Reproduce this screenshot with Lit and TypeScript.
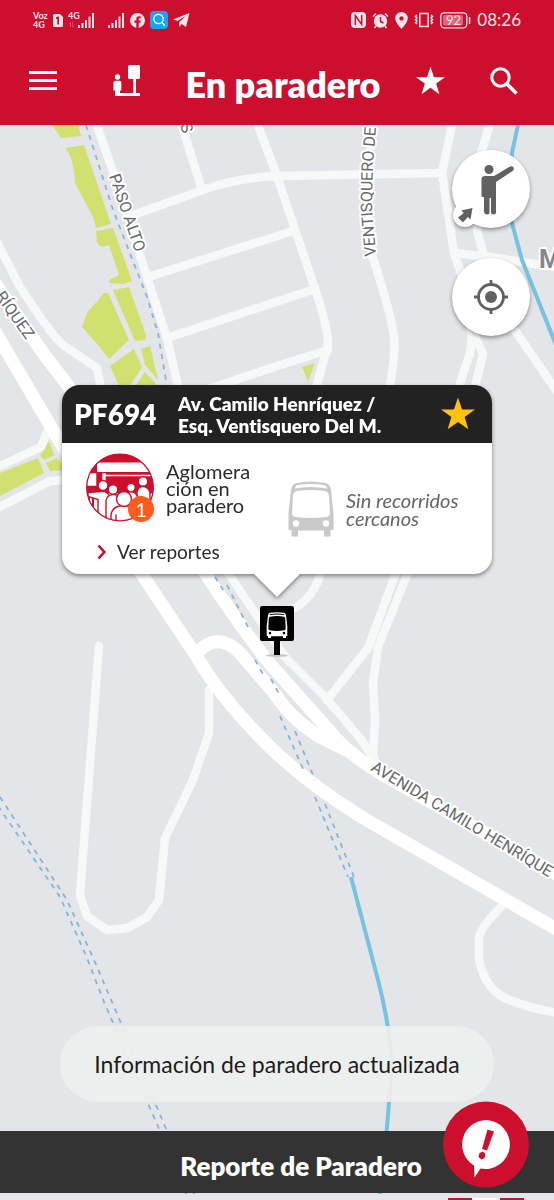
import { LitElement, html, css, svg } from "lit";
import { customElement, property } from "lit/decorators.js";

const PARKS = [
  "52,125 78,125 81,136 61,138",
  "66,148 84,145 111,224 96,228 93,217 75,183 74,170 71,158",
  "96,231 113,228 132,281 123,284 109,283 109,280 119,275 109,245 102,247 97,243",
  "113,290 129,287 146,335 145,340 135,341",
  "87,313 104,293 108,293 129,340 109,359 100,347 82,327",
  "110,366 134,349 142,367 131,384 129,392 122,392",
  "134,388 145,372 158,386 158,392 134,392",
  "141,349 150,346 158,380 145,365",
  "302,367 315,363 308,381",
  "0,473 38,458 44,473 0,496",
  "49,441 54,455 44,460 40,456",
  "46,463 57,458 66,470 50,471",
];

const STREETS = [
  "M95 120 L115 177 L147 277 L167 338 L180 395",
  "M180 120 L202 190",
  "M128 217 L200 191 Q235 178 277 176 L441 173",
  "M148 277 L290 232",
  "M167 338 L312 290",
  "M200 392 L277 366 L328 350",
  "M256 120 L277 176 L312 280 Q328 325 328 345 L314 395",
  "M373 120 L367 190 L372 255 Q393 320 394 338 Q396 355 388 395",
  "M453 120 L442 173 L454 253 L464 282 L472 337 L470 353 L456 395",
  "M491 120 L480 157 L477 230 L484 256",
  "M475 337 L483 354 L473 395",
  "M454 253 L490 257 L560 268",
  "M505 316 L560 396",
  "M322 570 Q314 597 295 608",
  "M397 570 L368 648 L327 700",
  "M409 570 L378 647 L373 683 L375 720 L373 757",
  "M226 570 L285 657 L325 697 L360 738 L375 760",
  "M99 646 L80 895 L87 916 L107 930 L128 928 L147 917 L159 900 L165 838 L193 780 L209 733 L209 690",
  "M507 901 Q482 925 479 937 L479 960 Q486 992 510 1000 Q535 1010 560 1013",
  "M-4 240 L20 287 L40 317 Q58 342 66 347 L97 368 L102 392",
  "M-4 468 L41 447 L50 425",
  "M-4 509 L50 481 L66 480",
];

const AVENUES = [
  "M-10 276 L43 353 L66 383 L205 573 Q240 626 270 664 L327 728 Q345 752 380 773 L560 876",
  "M-10 323 L57 437 L141 573 L197 657 Q222 700 270 747 Q310 786 370 822 L560 931",
  "M196 654 Q217 630 240 653 L275 694 Q290 718 320 737 L350 752",
];

const CANALS = [
  "M86 125 L113 210 L147 297 L158 333 L168 392",
  "M215 577 L225 593",
  "M227 585 L249 629",
  "M255 660 L263 674",
  "M271 679 L279 694",
  "M280 716 L303 769",
  "M295 731 L315 780",
  "M315 797 L348 877",
  "M325 804 L354 877",
  "M0 797 L67 900 L94 960 L112 1002 L170 1138 L197 1200",
  "M-2 806 L60 897 L87 958 L104 1002 L163 1138 L189 1200",
];

const STAR =
  "M12 1 L14.7 9 H23.3 L16.4 14 L18.9 22.2 L12 17.3 L5.1 22.2 L7.6 14 L0.7 9 H9.3 Z";

@customElement("city-map")
class CityMap extends LitElement {
  static styles = css`
    :host { display: block; background: #e4e5e9; }
    .canvas { display: block; width: 100%; height: 100%; }
    .park { fill: #d2e06f; }
    .street, .avenue, .river, .canal { fill: none; stroke-linejoin: round; }
    .street { stroke: #f7f8f8; stroke-width: 8.5; stroke-linecap: round; }
    .avenue { stroke: #ffffff; stroke-width: 13; }
    .river { stroke: #76c2e0; stroke-width: 4; }
    .canal { stroke: #86b4d8; stroke-width: 1.8; stroke-dasharray: 5 5.5; }
    .label {
      font: 400 16px Roboto, sans-serif;
      fill: #66686a;
      stroke: #ffffff;
      stroke-width: 4;
      stroke-linejoin: round;
      paint-order: stroke;
    }
    .place { font: 700 25px Roboto, sans-serif; fill: #85878a; }
  `;

  render() {
    return html`<svg class="canvas" viewBox="0 125 554 1075" preserveAspectRatio="xMidYMin slice" role="img" aria-label="Mapa">
      ${PARKS.map((p) => svg`<polygon class="park" points=${p}></polygon>`)}
      ${STREETS.map((d) => svg`<path class="street" d=${d}></path>`)}
      <path class="river" d="M519 120 L512 153 V223 L522 260 L556 345 M351 877 L378 980 Q396 1050 390 1090 L386 1140 L379 1200" />
      ${AVENUES.map((d) => svg`<path class="avenue" d=${d}></path>`)}
      ${CANALS.map((d) => svg`<path class="canal" d=${d}></path>`)}
      <defs>
        <path id="ventisquero" d="M376 256 L372 205 L373 165 L378 100" />
      </defs>
      <text class="label" transform="translate(109 176) rotate(71)">PASO ALTO</text>
      <text class="label" transform="translate(180 125) rotate(72)">S</text>
      <text class="label"><textPath href="#ventisquero">VENTISQUERO DE</textPath></text>
      <text class="label" transform="translate(-5 296) rotate(55)">RÍQUEZ</text>
      <text class="label" transform="translate(370 770) rotate(31)">AVENIDA CAMILO HENRÍQUE</text>
      <text class="label place" x="539" y="268">M</text>
    </svg>`;
  }
}

@customElement("status-bar")
class StatusBar extends LitElement {
  static styles = css`
    :host {
      display: flex;
      align-items: center;
      justify-content: space-between;
      height: 40px;
      padding: 0 33px;
      color: #ffe3ea;
      background: #cb0f2d;
      font-family: Lato, sans-serif;
    }
    .group { display: flex; align-items: center; gap: 6px; }
    .lead { gap: 5px; }
    .voice { font-size: 9px; font-weight: 700; line-height: 9px; }
    .time { font-size: 17px; line-height: 20px; }
    .icon { display: block; fill: currentColor; }
    .pct { font: 400 13px Lato, sans-serif; }
    .net { font: 700 9px Lato, sans-serif; }
  `;

  render() {
    return html`
      <div class="group lead">
        <div class="voice">Voz<br />4G</div>
        <svg class="icon" width="10" height="13" viewBox="0 0 10 13"><path fill-rule="evenodd" d="M1.5 0H7L10 3V11.5Q10 13 8.500 13H1.500Q0 13 0 11.500V1.500Q0 0 1.500 0ZM3 3.500V5H4.300V10.500H6V2.500H4.500Z" /></svg>
        <svg class="icon" width="27" height="18" viewBox="0 0 27 18"><text class="net" x="0" y="8">4G</text><path d="M10 14h2v3h-2zM13.500 12h2v5h-2zM17 9h2v8h-2zM20.500 5.500h2V17h-2zM24 2h2v15h-2z" /><path opacity=".45" d="M1.500 13 3 10.500V16H2.200V13ZM5 10.500V14.500H6L4.500 17V10.500Z" /></svg>
        <svg class="icon" width="25" height="18" viewBox="-8 0 25 18"><path d="M0 14h2v3H0zM3.500 12h2v5h-2zM7 9h2v8H7zM10.500 5.500h2V17h-2zM14 2h2v15h-2z" /></svg>
        <svg class="icon" width="15" height="15" viewBox="0 0 15 15"><path fill-rule="evenodd" d="M7.500 0A7.500 7.500 0 0 0 6.300 14.900V9.700H4.400V7.500H6.300V6Q6.300 3.200 9 3.200L10.700 3.400V5.200H9.700Q8.700 5.200 8.700 6.200V7.500H10.700L10.400 9.700H8.700V14.900A7.500 7.500 0 0 0 7.500 0Z" /></svg>
        <svg class="icon" width="18" height="18" viewBox="0 0 18 18"><rect width="18" height="18" rx="4" fill="#16a5f5" /><circle cx="8.500" cy="8" r="4.700" fill="none" stroke="#fff" stroke-width="1.300" /><path d="M12 11.500 14.500 14.500" stroke="#fff" stroke-width="1.400" stroke-linecap="round" /></svg>
        <svg class="icon" width="17" height="16" viewBox="0 0 17 16"><path d="M16.500 1 0 7.500 4.500 9 13 3.800 6.200 10.200V15L8.700 12 13 15Z" /></svg>
      </div>
      <div class="group">
        <svg class="icon" width="15" height="16" viewBox="0 0 15 16"><rect width="15" height="16" rx="4" /><path d="M4.300 13V3.500L10.700 12.500V3" fill="none" stroke="#cb0f2d" stroke-width="1.500" /></svg>
        <svg class="icon" width="17" height="17" viewBox="0 0 17 17"><circle cx="8.500" cy="9" r="6.700" /><path d="M1 4.500 4 1.500M13 1.500 16 4.500M4 14 2.500 16M13 14 14.500 16" stroke="currentColor" stroke-width="1.600" /><path d="M8.500 5V9.500L11.500 11" fill="none" stroke="#cb0f2d" stroke-width="1.500" /></svg>
        <svg class="icon" width="13" height="17" viewBox="0 0 13 17"><path fill-rule="evenodd" d="M6.500 0A6.300 6.300 0 0 0 .2 6.300C.2 10.500 6.500 17 6.500 17S12.800 10.500 12.800 6.300A6.300 6.300 0 0 0 6.500 0ZM6.500 4.200A2.200 2.200 0 1 1 6.500 8.600A2.200 2.200 0 0 1 6.500 4.200Z" /></svg>
        <svg class="icon" width="20" height="16" viewBox="0 0 20 16"><path d="M5.800 1.500H14.200V14.500H5.800ZM3 3 1.500 4.500 3 6 1.500 7.500 3 9 1.500 10.500 3 12M17 3 18.500 4.500 17 6 18.500 7.500 17 9 18.500 10.500 17 12" fill="none" stroke="currentColor" stroke-width="1.500" /></svg>
        <svg class="icon" width="31" height="17" viewBox="0 0 31 17"><rect x=".8" y=".8" width="26" height="15" rx="3.500" fill="none" stroke="currentColor" stroke-width="1.300" /><rect x="3" y="3" width="20" height="10.600" rx="1.500" opacity=".4" /><rect x="28.800" y="5" width="1.500" height="7" /><text class="pct" x="6" y="13">92</text></svg>
        <div class="time">08:26</div>
      </div>
    `;
  }
}

@customElement("stop-callout")
class StopCallout extends LitElement {
  @property() code = "";
  @property({ type: Number }) reports = 0;

  static styles = css`
    :host {
      display: block;
      width: 100%;
      max-width: 430px;
      filter: drop-shadow(0 2px 2px rgba(0, 0, 0, 0.45));
      font-family: Lato, sans-serif;
      font-variant-ligatures: none;
      color: #2b2b2b;
    }
    .head {
      display: flex;
      align-items: center;
      height: 58px;
      padding: 0 16px 0 12px;
      color: #ffffff;
      background: #222222;
      border-radius: 18px 18px 0 0;
    }
    .code { width: 104px; margin: 0; font-size: 28px; font-weight: 800; line-height: 32px; }
    .address { flex: 1; margin: 0; padding-top: 2px; font-size: 19px; font-weight: 800; line-height: 22px; }
    button { padding: 0; border: 0; background: none; color: inherit; font: inherit; cursor: pointer; }
    .fav { display: flex; }
    .body {
      display: grid;
      grid-template-columns: 202px 1fr;
      align-items: start;
      height: 131px;
      padding: 10px 24px 0;
      box-sizing: border-box;
      background: #ffffff;
      border-radius: 0 0 18px 18px;
    }
    .report { display: flex; gap: 12px; }
    .pic { position: relative; width: 68px; height: 69px; }
    .count {
      position: absolute;
      right: 0;
      bottom: 0;
      width: 26px;
      height: 26px;
      border-radius: 50%;
      background: #ff5c1c;
      color: #ffffff;
      font-size: 20px;
      line-height: 27px;
      text-align: center;
    }
    .kind { width: 90px; margin: 0; padding-top: 10px; font-size: 20px; line-height: 17px; }
    .more { display: flex; align-items: center; gap: 11px; margin: 19px 0 0 11px; font-size: 19px; line-height: 22px; }
    .none { display: flex; align-items: center; gap: 12px; margin-top: 28px; color: #666666; font-size: 20px; font-style: italic; line-height: 18px; }
    .text { margin: 0; }
    .icon { display: block; flex: none; }
    .tip { display: block; margin: -1px auto 0; }
  `;

  render() {
    return html`
      <header class="head">
        <h2 class="code">${this.code}</h2>
        <p class="address">Av. Camilo Henríquez /<br />Esq. Ventisquero Del M.</p>
        <button class="fav" aria-label="Quitar de favoritos">
          <svg class="icon" width="36" height="36" viewBox="0 0 24 24"><path d=${STAR} fill="#ffc20e" /></svg>
        </button>
      </header>
      <div class="body">
        <div>
          <div class="report">
            <div class="pic">
              <svg class="icon" width="68" height="69" viewBox="0 0 68 68">
                <defs><clipPath id="disc"><circle cx="34" cy="34" r="33.500" /></clipPath></defs>
                <g clip-path="url(#disc)" stroke="#cb0f2d" stroke-width="1.400" fill="#fff">
                  <rect width="68" height="68" fill="#cb0f2d" />
                  <path d="M0 41H12V68H0ZM17 40H66V68H17Z" stroke="none" />
                  <path d="M11 9H58L63 18.500H11Z" stroke="none" />
                  <path d="M0 19H11V33H0ZM17 20H66M17 26H66" />
                  <path d="M17 20.500H19V27H17ZM17 22H66" stroke="#fff" />
                  <path d="M3 34V56M7 34V60" stroke-width="2" />
                  <path d="M2 39 14 38Q22 37 24 44V68H12V46L2 43Z" />
                  <circle cx="17" cy="32" r="5" />
                  <path d="M51 68V39Q52 33 57 33T64 39V50Z" />
                  <circle cx="57" cy="28" r="4.700" />
                  <path d="M37 50Q38 38 45 38T53 50V60H37Z" />
                  <circle cx="45" cy="34" r="4.200" />
                  <path d="M20 68V47Q21 41 28 41T36 50V68Z" />
                  <circle cx="27" cy="36" r="4.700" />
                  <path d="M25 70V62Q26 52 38 52T51 62V70ZM30 61V68M46 61V68" />
                  <circle cx="38" cy="45.500" r="7.500" />
                </g>
                <circle cx="34" cy="34" r="33.300" fill="none" stroke="#cb0f2d" stroke-width="1.200" />
              </svg>
              <span class="count">${this.reports}</span>
            </div>
            <p class="kind">Aglomera<br />ción en<br />paradero</p>
          </div>
          <button class="more">
            <svg class="icon" width="9" height="16" viewBox="0 0 9 16"><path d="M1.500 1.500 7.300 8 1.500 14.500" fill="none" stroke="#c0102c" stroke-width="2.600" /></svg>
            Ver reportes
          </button>
        </div>
        <div class="none">
          <svg class="icon" width="46" height="56" viewBox="0 0 46 56">
            <path fill="#c9c9c9" fill-rule="evenodd" d="M3 9Q3.500 3 9 2Q23 -1 37 2Q42.500 3 43 9L45.500 32V49H42.500V55.500H36V49.500H10V55.500H3.500V49H.5V32ZM7 7.500Q23 4.500 39 7.500Q39 4.500 36 4Q23 2 10 4Q7 4.500 7 7.500ZM8.500 10Q5.500 11 5 15L4 32Q4 35.500 7.500 36Q23 38 38.500 36Q42 35.500 42 32L41 15Q40.500 11 37.500 10Q23 8 8.500 10ZM8 39.300A3.200 3.200 0 1 0 8 45.700A3.200 3.200 0 1 0 8 39.300ZM38 39.300A3.200 3.200 0 1 0 38 45.700A3.200 3.200 0 1 0 38 39.300Z" />
          </svg>
          <p class="text">Sin recorridos<br />cercanos</p>
        </div>
      </div>
      <svg class="tip" width="48" height="24" viewBox="0 0 48 24"><path d="M0 0H48L24 24Z" fill="#fff" /></svg>
    `;
  }
}

@customElement("app-root")
class AppRoot extends LitElement {
  static styles = css`
    :host {
      display: flex;
      flex-direction: column;
      min-height: 100vh;
      font-family: Lato, sans-serif;
      font-variant-ligatures: none;
      color: #1c1c1c;
    }
    button { padding: 0; border: 0; background: none; color: inherit; font: inherit; cursor: pointer; }
    .icon { display: block; }
    .top {
      display: flex;
      align-items: center;
      height: 85px;
      padding: 0 36px 4px 28px;
      box-sizing: border-box;
      color: #ffffff;
      background: #cb0f2d;
    }
    .logo { margin-left: 55px; }
    .title { flex: 1; margin: 0; padding: 6px 0 0 10px; font-size: 36px; font-weight: 800; line-height: 40px; text-align: center; }
    .search { margin-left: 44px; }
    .stage { position: relative; display: flex; flex: 1; flex-direction: column; overflow: hidden; }
    .map { position: absolute; inset: 0; }
    .tools { position: relative; display: flex; flex-direction: column; align-items: flex-end; gap: 30px; padding: 25px 24px 0; }
    .tool {
      position: relative;
      display: grid;
      place-items: center;
      width: 78px;
      height: 78px;
      border-radius: 50%;
      background: #ffffff;
      filter: drop-shadow(0 2px 2px rgba(0, 0, 0, 0.4));
    }
    .corner { position: absolute; left: 1px; bottom: 1px; width: 24px; height: 24px; border-radius: 50%; background: #ffffff; }
    .figure { position: relative; }
    .stop { position: absolute; top: 260px; left: 0; right: 0; display: flex; flex-direction: column; align-items: center; gap: 9px; padding: 0 62px; }
    .toast {
      position: relative;
      align-self: center;
      margin: auto 0 29px;
      padding: 24px 34px;
      border-radius: 38px;
      background: rgba(238, 240, 239, 0.92);
      font-size: 23px;
      line-height: 28px;
    }
    .sheet { position: relative; display: grid; place-items: center; height: 62px; margin-bottom: 7px; padding: 8px 0 0 48px; box-sizing: border-box; background: #333333; color: #ffffff; }
    .name { margin: 0; font-size: 26px; font-weight: 800; line-height: 28px; }
    .alert { position: absolute; top: -30px; right: 25px; width: 86px; height: 87px; }
    .peek { position: absolute; right: 0; bottom: 0; left: 0; display: flex; justify-content: flex-end; height: 6px; padding-right: 30px; background: #e8e4ec; }
    .tab { width: 76px; height: 2px; margin-top: 4px; background: linear-gradient(90deg, #cb0f2d 24px, #ffffff 24px 52px, #cb0f2d 52px); }
  `;

  render() {
    return html`
      <status-bar></status-bar>
      <header class="top">
        <button aria-label="Menú">
          <svg class="icon" width="30" height="22" viewBox="0 0 30 22"><path d="M1 2.500H29M1 10.500H29M1 18.500H29" stroke="#fff" stroke-width="3" /></svg>
        </button>
        <svg class="icon logo" width="28" height="32" viewBox="0 0 28 32" fill="#fff"><circle cx="4.500" cy="12" r="2.700" /><path d="M2.500 15.800H6.500Q8.300 15.800 8.300 17.500V25.500H7V28H20.300V14H16.500Q15 14 15 12.500V1.500Q15 0 16.500 0H25.500Q27 0 27 1.500V12.500Q27 14 25.500 14H23V28H27V31H2V25.500H.5V17.500Q.5 15.800 2.500 15.800Z" /></svg>
        <h1 class="title">En paradero</h1>
        <button aria-label="Favoritos">
          <svg class="icon" width="31" height="32" viewBox="0 0 24 24"><path d=${STAR} fill="#fff" /></svg>
        </button>
        <button class="search" aria-label="Buscar">
          <svg class="icon" width="28" height="28" viewBox="0 0 28 28"><circle cx="10.500" cy="10.500" r="8.700" fill="none" stroke="#fff" stroke-width="3" /><path d="M16.500 16.500 26.500 26.500" stroke="#fff" stroke-width="3.600" /></svg>
        </button>
      </header>
      <main class="stage">
        <city-map class="map"></city-map>
        <div class="tools">
          <button class="tool" aria-label="Modo paradero">
            <span class="corner"></span>
            <svg class="icon figure" width="78" height="78" viewBox="0 0 78 78" fill="#616161">
              <circle cx="37" cy="19.500" r="4.500" />
              <path d="M33 26H42L58 16.500Q60.500 15.500 61.500 17.500T60.500 21L44 32V62Q44 64.500 41.500 64.500T39 62V48H37.500V62Q37.500 64.500 35 64.500T32 62V47H30.500Q29.500 47 29.500 45.500V29.500Q29.500 26 33 26Z" />
              <path d="M20.500 58 18.500 69.500 15.800 67 11 72.500 6 67.500 11.800 63 9.300 60.500Z" />
            </svg>
          </button>
          <button class="tool" aria-label="Mi ubicación">
            <svg class="icon" width="34" height="34" viewBox="0 0 34 34"><g fill="none" stroke="#616161" stroke-width="2.800"><circle cx="17" cy="17" r="12.500" /><path d="M17 0V6M17 28V34M0 17H6M28 17H34" /></g><circle cx="17" cy="17" r="6" fill="#616161" /></svg>
          </button>
        </div>
        <div class="stop">
          <stop-callout code="PF694" reports="1"></stop-callout>
          <svg class="icon" width="42" height="51" viewBox="0 0 42 51">
            <ellipse cx="21" cy="49.500" rx="11" ry="1.300" fill="#c4c5c8" />
            <path d="M6 0H36Q38 0 38 2V33Q38 35 36 35H24V49H18V35H6Q4 35 4 33V2Q4 0 6 0Z" />
            <path fill="#fff" fill-rule="evenodd" d="M12 9.500Q12 7.300 14 6.800Q21 5.500 28 6.800Q30 7.300 30 9.500L31.300 20V30H30V32H27V30.300H15V32H12V30H10.700V20ZM13.500 9Q21 8 28.500 9Q28 8 27.500 8Q21 7 14.500 8Q14 8 13.500 9ZM14 10.700Q13 11 12.800 12.500L12.300 22.500Q12.300 24 13.700 24.300Q21 25.500 28.300 24.300Q29.700 24 29.700 22.500L29.200 12.500Q29 11 28 10.700Q21 9.500 14 10.700ZM14 25.800A1.300 1.300 0 1 0 14 28.400A1.300 1.300 0 1 0 14 25.800ZM28 25.800A1.300 1.300 0 1 0 28 28.400A1.300 1.300 0 1 0 28 25.800Z" />
          </svg>
        </div>
        <div class="toast" role="status">Información de paradero actualizada</div>
        <section class="sheet">
          <h2 class="name">Reporte de Paradero</h2>
          <button class="alert" aria-label="Nuevo reporte">
            <svg class="icon" width="86" height="87" viewBox="0 0 86 87"><circle cx="43" cy="43.500" r="43" fill="#cb0f2d" /><path d="M43 19A24.500 24.500 0 1 1 37.500 67.500L31.500 76.500 31 64.500A24.500 24.500 0 0 1 43 19Z" fill="#fff" /><path d="M44.500 28.500 51 30.500 44 49.500 39 48ZM40 50.500 42.500 53 41.500 57 38.500 58.500 35.500 56 36.500 52Z" fill="#cb0f2d" /></svg>
          </button>
        </section>
        <div class="peek"><div class="tab"></div></div>
      </main>
    `;
  }
}
